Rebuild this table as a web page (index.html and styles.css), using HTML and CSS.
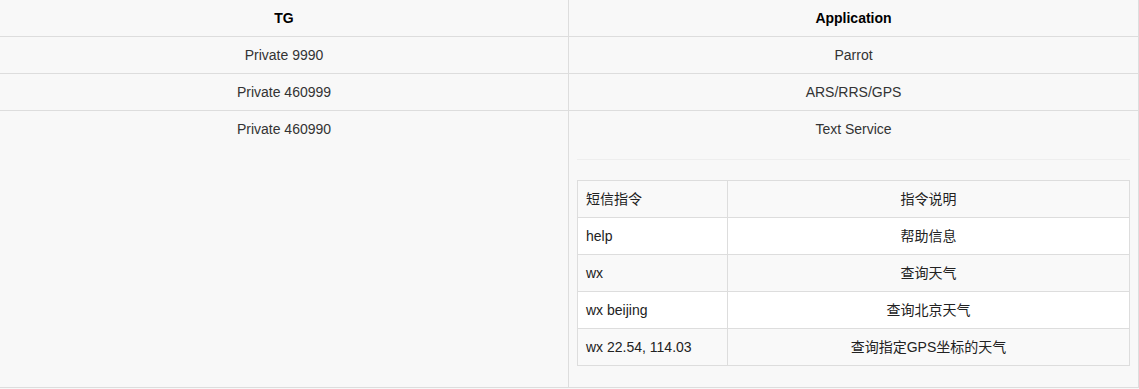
FILE: index.html
```html
<!DOCTYPE html>
<html lang="zh-CN">
<head>
<meta charset="utf-8">
<title>TG Application</title>
<link rel="stylesheet" href="styles.css">
</head>
<body>
<table class="tg-table">
  <colgroup>
    <col class="col-left">
    <col class="col-right">
  </colgroup>
  <thead>
    <tr>
      <th>TG</th>
      <th>Application</th>
    </tr>
  </thead>
  <tbody>
    <tr>
      <td>Private 9990</td>
      <td>Parrot</td>
    </tr>
    <tr>
      <td>Private 460999</td>
      <td>ARS/RRS/GPS</td>
    </tr>
    <tr>
      <td>Private 460990</td>
      <td>
        <p class="cell-title">Text Service</p>
        <hr class="divider">
        <table class="cmd-table">
          <tbody>
            <tr>
              <td class="cmd">短信指令</td>
              <td class="desc">指令说明</td>
            </tr>
            <tr>
              <td class="cmd">help</td>
              <td class="desc">帮助信息</td>
            </tr>
            <tr>
              <td class="cmd">wx</td>
              <td class="desc">查询天气</td>
            </tr>
            <tr>
              <td class="cmd">wx beijing</td>
              <td class="desc">查询北京天气</td>
            </tr>
            <tr>
              <td class="cmd">wx 22.54, 114.03</td>
              <td class="desc">查询指定GPS坐标的天气</td>
            </tr>
          </tbody>
        </table>
      </td>
    </tr>
  </tbody>
</table>
</body>
</html>
```

FILE: styles.css
```css
* {
  box-sizing: border-box;
}

html, body {
  margin: 0;
  padding: 0;
  background: #f8f8f8;
}

body {
  font-family: "Liberation Sans", Arial, "Noto Sans CJK SC", sans-serif;
  font-size: 14px;
  line-height: 20px;
  color: #333;
}

.tg-table {
  border-collapse: collapse;
  border-spacing: 0;
  width: calc(100% + 1px);
  margin: -1px 0 0 -1px;
  table-layout: fixed;
}

.tg-table > thead > tr > th,
.tg-table > tbody > tr > td {
  border: 1px solid #ddd;
  padding: 8px;
  text-align: center;
  vertical-align: top;
  line-height: 20px;
}

.tg-table > thead > tr > th {
  font-weight: bold;
  color: #000;
}

.col-left {
  width: 569px;
}

.cell-title {
  margin: 0;
}

.divider {
  margin: 20px 0;
  border: 0;
  border-top: 1px solid #eee;
  height: 0;
}

.cmd-table {
  width: 100%;
  border-collapse: collapse;
  border-spacing: 0;
  margin-bottom: 13px;
  background: #fff;
}

.cmd-table td {
  border: 1px solid #ddd;
  padding: 8px;
  line-height: 20px;
  color: #222;
}

.cmd-table tr:nth-child(odd) td {
  background: #f9f9f9;
}

.cmd-table .cmd {
  width: 150px;
  text-align: left;
}

.cmd-table .desc {
  text-align: center;
}
```
